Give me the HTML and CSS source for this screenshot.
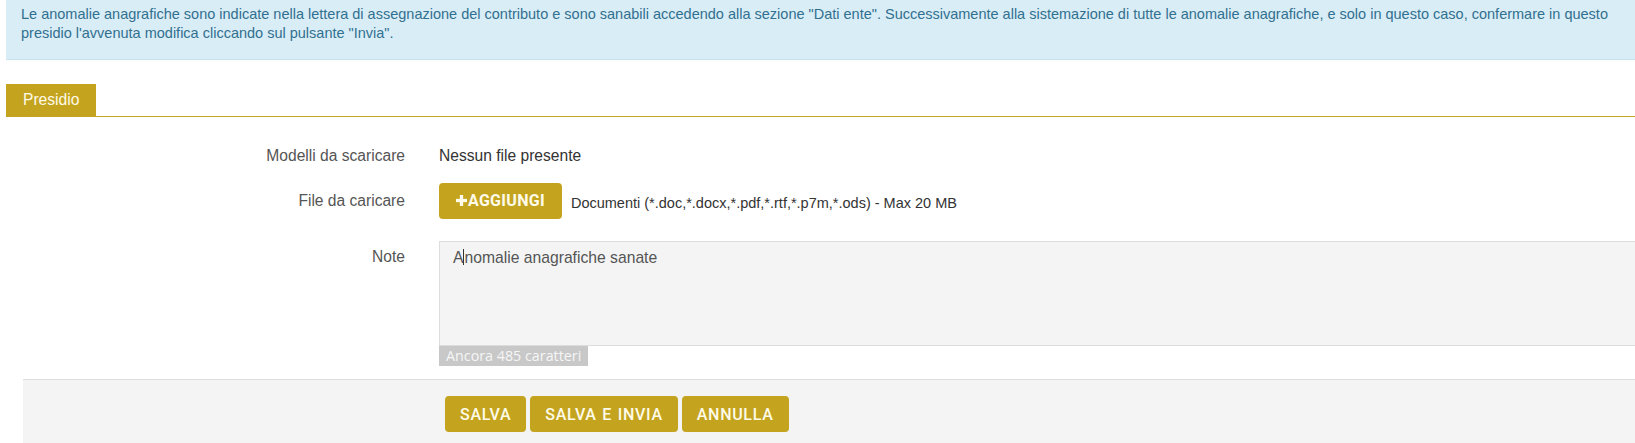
FILE: index.html
```html
<!DOCTYPE html>
<html lang="it">
<head>
<meta charset="utf-8">
<title>Presidio</title>
<link rel="stylesheet" href="styles.css">
</head>
<body>
<div class="page">
  <div class="alert">Le anomalie anagrafiche sono indicate nella lettera di assegnazione del contributo e sono sanabili accedendo alla sezione "Dati ente". Successivamente alla sistemazione di tutte le anomalie anagrafiche, e solo in questo caso, confermare in questo presidio l'avvenuta modifica cliccando sul pulsante "Invia".</div>

  <div class="tabs">
    <div class="tab">Presidio</div>
  </div>

  <div class="form">
    <div class="row row-models">
      <div class="label">Modelli da scaricare</div>
      <div class="value">Nessun file presente</div>
    </div>
    <div class="row row-files">
      <div class="label">File da caricare</div>
      <div class="value files">
        <button class="btn btn-add" type="button"><svg class="plus" viewBox="0 0 10 10" width="11" height="11" aria-hidden="true"><rect x="3.5" y="0" width="3" height="10" fill="currentColor"/><rect x="0" y="3.5" width="10" height="3" fill="currentColor"/></svg>AGGIUNGI</button>
        <span class="hint">Documenti (*.doc,*.docx,*.pdf,*.rtf,*.p7m,*.ods) - Max 20 MB</span>
      </div>
    </div>
    <div class="row row-note">
      <div class="label">Note</div>
      <div class="value note">
        <div class="textarea" role="textbox">A<span class="caret"></span>nomalie anagrafiche sanate</div>
        <div class="counter">Ancora 485 caratteri</div>
      </div>
    </div>
  </div>

  <div class="footer">
    <button class="btn btn-foot" type="button">SALVA</button>
    <button class="btn btn-foot" type="button">SALVA E INVIA</button>
    <button class="btn btn-foot" type="button">ANNULLA</button>
  </div>
</div>
</body>
</html>
```

FILE: styles.css
```css
html, body {
  margin: 0;
  padding: 0;
  overflow: hidden;
  background: #ffffff;
}

body {
  font-family: "Liberation Sans", Arial, sans-serif;
  color: #333333;
}

.page {
  width: 1660px;
}

.alert {
  margin-left: 6px;
  padding: 5px 20px 16px 15px;
  background: #d9edf7;
  border-bottom: 1px solid #c6e3ee;
  color: #31708f;
  font-size: 14.5px;
  line-height: 19px;
}

.tabs {
  display: flex;
  margin: 24px 0 0 6px;
  border-bottom: 1px solid #c4a522;
}

.tab {
  background: #c4a41f;
  color: #fffbe8;
  height: 32px;
  line-height: 32px;
  padding: 0 17px;
  font-size: 15.6px;
}

.form {
  padding-top: 29px;
}

.row {
  display: grid;
  grid-template-columns: 405px 1fr;
  column-gap: 34px;
  font-size: 15.6px;
  line-height: 20px;
}

.label {
  text-align: right;
  color: #555555;
}

.value {
  color: #333333;
}

.row-files {
  margin-top: 17px;
  align-items: center;
}

.files {
  display: flex;
  align-items: center;
  gap: 9px;
}

.hint {
  font-size: 14.5px;
  padding-top: 3px;
}

.row-note {
  margin-top: 22px;
}

.row-note .label {
  padding-top: 6px;
}

.textarea {
  height: 91px;
  border: 1px solid #dcdcdc;
  border-right: none;
  background: #f4f4f4;
  padding: 6px 13px;
  color: #555555;
  font-size: 15.7px;
  line-height: 20px;
}

.caret {
  display: inline-block;
  width: 1px;
  height: 16px;
  background: #333333;
  vertical-align: -2px;
}

.counter {
  display: inline-block;
  background: #c8c8c8;
  color: #f6f6f6;
  font-family: "Open Sans", sans-serif;
  font-size: 14.3px;
  line-height: 20px;
  padding: 0 7px;
}

.btn {
  border: none;
  background: #c4a41f;
  color: #fffbe8;
  font-family: Roboto, "Liberation Sans", sans-serif;
  border-radius: 4px;
  cursor: pointer;
}

.btn-add {
  display: flex;
  align-items: center;
  gap: 1px;
  height: 36px;
  padding: 0 17px 2px 17px;
  font-size: 16px;
  font-weight: 700;
  letter-spacing: 0.3px;
}

.plus {
  display: block;
}

.footer {
  margin: 13px 0 0 23px;
  border-top: 1px solid #dddddd;
  background: #f4f4f4;
  padding: 16px 0 20px 422px;
  display: flex;
  gap: 4px;
}

.btn-foot {
  height: 36px;
  padding: 0 15px;
  font-size: 16px;
  font-weight: 500;
  letter-spacing: 0.7px;
  word-spacing: 1px;
}
```
